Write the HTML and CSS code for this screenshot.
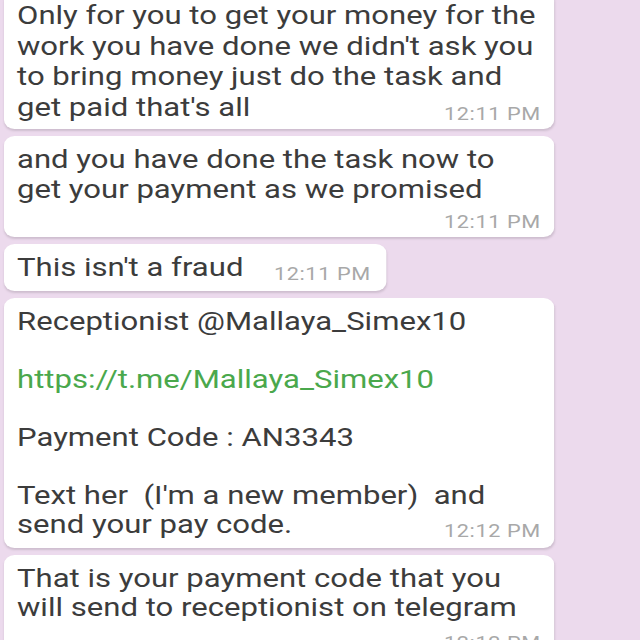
FILE: index.html
```html
<!DOCTYPE html>
<html lang="en">
<head>
<meta charset="utf-8">
<title>Chat</title>
<link rel="stylesheet" href="styles.css">
</head>
<body>
<div class="chat">
  <div class="bubble loose">
    <p class="msg">Only for you to get your money for the<br>work you have done we didn't ask you<br>to bring money just do the task and<br>get paid that's all<span class="time">12:11 PM</span></p>
  </div>
  <div class="bubble loose wrapped">
    <p class="msg">and you have done the task now to<br>get your payment as we promised<span class="time">12:11 PM</span></p>
  </div>
  <div class="bubble short">
    <p class="msg">This isn't a fraud<span class="time">12:11 PM</span></p>
  </div>
  <div class="bubble">
    <p class="msg">Receptionist @Mallaya_Simex10<br><br><a class="link" href="#">https://t.me/Mallaya_Simex10</a><br><br>Payment Code : AN3343<br><br>Text her &nbsp;(I'm a new member) &nbsp;and<br>send your pay code.<span class="time">12:12 PM</span></p>
  </div>
  <div class="bubble">
    <p class="msg">That is your payment code that you<br>will send to receptionist on telegram<span class="time">12:12 PM</span></p>
  </div>
</div>
</body>
</html>
```
FILE: styles.css
```css
html, body {
  margin: 0;
  padding: 0;
  background: #ecdaed;
  overflow: hidden;
}

.chat {
  display: flex;
  flex-direction: column;
  align-items: stretch;
  gap: 7px;
  width: 469px;
  margin: -8px 0 0 4.3px;
  transform: scaleX(1.173);
  transform-origin: 0 0;
  font-family: Roboto, "Liberation Sans", sans-serif;
}

.bubble {
  display: flow-root;
  background: #ffffff;
  border-radius: 9px;
  box-shadow: 0 2px 2px rgba(90, 80, 90, 0.2);
  padding: 8px 11.9px 7px 11.1px;
}

.bubble.loose {
  padding-bottom: 5px;
}

.bubble.short {
  align-self: flex-start;
  padding-right: 14px;
}

.msg {
  margin: 0;
  font-size: 26.5px;
  line-height: 29px;
  color: #3c3c3c;
}

.loose .msg {
  line-height: 30.5px;
}

.link {
  color: #4aa84c;
  text-decoration: none;
}

.time {
  float: right;
  margin: 12px -0.5px 0 26px;
  font-size: 18.5px;
  line-height: 20px;
  letter-spacing: 0.5px;
  color: #a8a8a8;
}

.wrapped .time {
  margin-top: 7px;
}
```
